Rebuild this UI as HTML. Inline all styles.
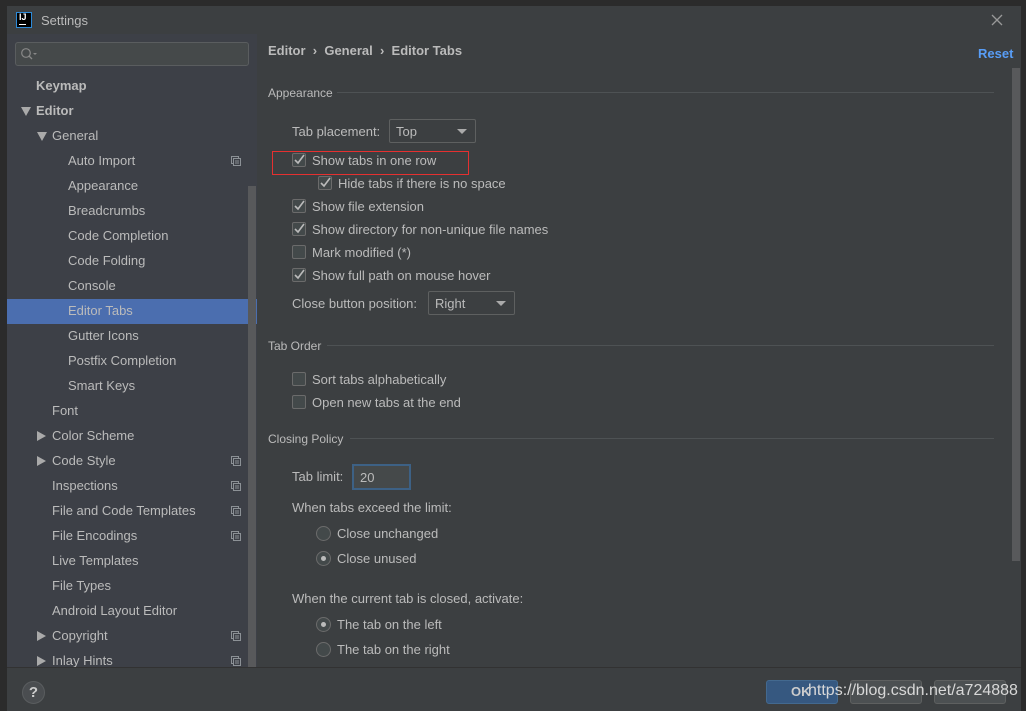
<!DOCTYPE html>
<html><head><meta charset="utf-8"><style>
*{margin:0;padding:0;box-sizing:border-box}
body{width:1026px;height:711px;background:#2b2b2b;font-family:"Liberation Sans",sans-serif;font-size:13px;color:#bbbbbb;position:relative;overflow:hidden}
.a{position:absolute;white-space:nowrap}
.win{position:absolute;left:7px;top:6px;width:1014px;height:705px;background:#3c3f41}
.side{position:absolute;left:7px;top:34px;width:250px;height:633px;background:#3d4047}
.t{position:absolute;white-space:nowrap;line-height:16px}
.s .t{margin-top:1px}
.b{font-weight:bold}
.arr{position:absolute;width:0;height:0}
.dn{border-left:5px solid transparent;border-right:5px solid transparent;border-top:9px solid #aaa}
.rt{border-top:5px solid transparent;border-bottom:5px solid transparent;border-left:9px solid #aaa}
.ic{position:absolute;width:10px;height:10px}
.cb{position:absolute;width:14px;height:14px;border:1px solid #6b6b6b;background:#43494a;border-radius:2px}
.rd{position:absolute;width:15px;height:15px;border:1px solid #6b6b6b;background:#43494a;border-radius:50%}
.rd.on::after{content:"";position:absolute;left:4px;top:4px;width:5px;height:5px;border-radius:50%;background:#bbb}
.sec{position:absolute;height:1px;background:#4e5254}
.dd{position:absolute;height:24px;border:1px solid #5e6060;border-radius:2px;background:#3c3f41;padding:4px 0 0 6px}
.dd::after{content:"";position:absolute;right:8px;top:9px;border-left:5px solid transparent;border-right:5px solid transparent;border-top:5px solid #aaa}
.btn{position:absolute;top:680px;height:24px;border:1px solid #5e6060;border-radius:3px;background:#4c5052}
</style></head><body>
<div class="win"></div>
<div class="a" style="left:16px;top:12px;width:16px;height:16px;background:#000;border:1px solid #2d8ad8"></div>
<div class="a b" style="left:19px;top:12px;font-size:9px;color:#fff">IJ</div>
<div class="a" style="left:19px;top:24px;width:7px;height:1px;background:#fff"></div>
<div class="a" style="left:41px;top:13px;font-size:13px;color:#bbb">Settings</div>
<svg class="a" style="left:991px;top:14px" width="12" height="12"><path d="M1 1L11 11M11 1L1 11" stroke="#999" stroke-width="1.3"/></svg>
<div class="side"></div>
<div class="a" style="left:15px;top:42px;width:234px;height:24px;border:1px solid #5a5d5f;border-radius:3px;background:#45494a"></div>
<svg class="a" style="left:20px;top:47px" width="20" height="14"><circle cx="6" cy="6" r="4.3" fill="none" stroke="#888" stroke-width="1.2"/><path d="M9 9L12 12" stroke="#888" stroke-width="1.3"/><path d="M13 6h4l-2 2z" fill="#888"/></svg>
<div class="a" style="left:7px;top:299px;width:250px;height:25px;background:#4b6eaf"></div>
<div class="s">
<div class="t b" style="left:36px;top:77px">Keymap</div>
<div class="arr dn" style="left:21px;top:107px"></div><div class="t b" style="left:36px;top:102px">Editor</div>
<div class="arr dn" style="left:37px;top:132px"></div><div class="t" style="left:52px;top:127px">General</div>
<div class="t" style="left:68px;top:152px">Auto Import</div>
<div class="t" style="left:68px;top:177px">Appearance</div>
<div class="t" style="left:68px;top:202px">Breadcrumbs</div>
<div class="t" style="left:68px;top:227px">Code Completion</div>
<div class="t" style="left:68px;top:252px">Code Folding</div>
<div class="t" style="left:68px;top:277px">Console</div>
<div class="t" style="left:68px;top:302px">Editor Tabs</div>
<div class="t" style="left:68px;top:327px">Gutter Icons</div>
<div class="t" style="left:68px;top:352px">Postfix Completion</div>
<div class="t" style="left:68px;top:377px">Smart Keys</div>
<div class="t" style="left:52px;top:402px">Font</div>
<div class="arr rt" style="left:37px;top:431px"></div><div class="t" style="left:52px;top:427px">Color Scheme</div>
<div class="arr rt" style="left:37px;top:456px"></div><div class="t" style="left:52px;top:452px">Code Style</div>
<div class="t" style="left:52px;top:477px">Inspections</div>
<div class="t" style="left:52px;top:502px">File and Code Templates</div>
<div class="t" style="left:52px;top:527px">File Encodings</div>
<div class="t" style="left:52px;top:552px">Live Templates</div>
<div class="t" style="left:52px;top:577px">File Types</div>
<div class="t" style="left:52px;top:602px">Android Layout Editor</div>
<div class="arr rt" style="left:37px;top:631px"></div><div class="t" style="left:52px;top:627px">Copyright</div>
<div class="arr rt" style="left:37px;top:656px"></div><div class="t" style="left:52px;top:652px">Inlay Hints</div>
</div>
<svg width="0" height="0" style="position:absolute"><defs><g id="cp"><rect x="0.5" y="0.5" width="7" height="7" fill="none" stroke="#8c9196"/><rect x="2.5" y="2.5" width="7" height="7" fill="#3d4047" stroke="#8c9196"/><path d="M4 5h4M4 7h4" stroke="#8c9196"/></g></defs></svg>
<svg class="ic" style="left:231px;top:156px"><use href="#cp"/></svg>
<svg class="ic" style="left:231px;top:456px"><use href="#cp"/></svg>
<svg class="ic" style="left:231px;top:481px"><use href="#cp"/></svg>
<svg class="ic" style="left:231px;top:506px"><use href="#cp"/></svg>
<svg class="ic" style="left:231px;top:531px"><use href="#cp"/></svg>
<svg class="ic" style="left:231px;top:631px"><use href="#cp"/></svg>
<svg class="ic" style="left:231px;top:656px"><use href="#cp"/></svg>
<div class="a" style="left:248px;top:186px;width:8px;height:481px;background:#58595b"></div>
<div class="t b" style="left:268px;top:43px">Editor &nbsp;›&nbsp; General &nbsp;›&nbsp; Editor Tabs</div>
<div class="t b" style="left:978px;top:46px;color:#589df6">Reset</div>
<div class="a" style="left:1012px;top:68px;width:8px;height:493px;background:#58595b"></div>
<div class="t" style="left:268px;top:85px;font-size:12px">Appearance</div><div class="sec" style="left:337px;top:92px;width:657px"></div>
<div class="t" style="left:292px;top:124px">Tab placement:</div>
<div class="dd" style="left:389px;top:119px;width:87px">Top</div>
<div class="a" style="left:272px;top:151px;width:197px;height:24px;border:1px solid #e53030"></div>
<div class="cb" style="left:292px;top:153px"></div><div class="t" style="left:312px;top:153px">Show tabs in one row</div>
<div class="cb" style="left:318px;top:176px"></div><div class="t" style="left:338px;top:176px">Hide tabs if there is no space</div>
<div class="cb" style="left:292px;top:199px"></div><div class="t" style="left:312px;top:199px">Show file extension</div>
<div class="cb" style="left:292px;top:222px"></div><div class="t" style="left:312px;top:222px">Show directory for non-unique file names</div>
<div class="cb" style="left:292px;top:245px"></div><div class="t" style="left:312px;top:245px">Mark modified (*)</div>
<div class="cb" style="left:292px;top:268px"></div><div class="t" style="left:312px;top:268px">Show full path on mouse hover</div>
<svg class="a" style="left:292px;top:150px" width="50" height="140"><g fill="none" stroke="#bbb" stroke-width="1.6"><path d="M3 10l3 3 6-8"/><path d="M29 33l3 3 6-8"/><path d="M3 56l3 3 6-8"/><path d="M3 79l3 3 6-8"/><path d="M3 125l3 3 6-8"/></g></svg>
<div class="t" style="left:292px;top:296px">Close button position:</div>
<div class="dd" style="left:428px;top:291px;width:87px">Right</div>
<div class="t" style="left:268px;top:338px;font-size:12px">Tab Order</div><div class="sec" style="left:327px;top:345px;width:667px"></div>
<div class="cb" style="left:292px;top:372px"></div><div class="t" style="left:312px;top:372px">Sort tabs alphabetically</div>
<div class="cb" style="left:292px;top:395px"></div><div class="t" style="left:312px;top:395px">Open new tabs at the end</div>
<div class="t" style="left:268px;top:431px;font-size:12px">Closing Policy</div><div class="sec" style="left:350px;top:438px;width:644px"></div>
<div class="t" style="left:292px;top:469px">Tab limit:</div>
<div class="a" style="left:352px;top:464px;width:59px;height:26px;border:2px solid #3d6185;background:#45494a;padding:4px 0 0 6px">20</div>
<div class="t" style="left:292px;top:500px">When tabs exceed the limit:</div>
<div class="rd" style="left:316px;top:526px"></div><div class="t" style="left:337px;top:526px">Close unchanged</div>
<div class="rd on" style="left:316px;top:551px"></div><div class="t" style="left:337px;top:551px">Close unused</div>
<div class="t" style="left:292px;top:591px">When the current tab is closed, activate:</div>
<div class="rd on" style="left:316px;top:617px"></div><div class="t" style="left:337px;top:617px">The tab on the left</div>
<div class="rd" style="left:316px;top:642px"></div><div class="t" style="left:337px;top:642px">The tab on the right</div>
<div class="a" style="left:7px;top:667px;width:1014px;height:1px;background:#323232"></div>
<div class="a" style="left:7px;top:668px;width:1014px;height:43px;background:#3c3f41"></div>
<div class="a b" style="left:22px;top:681px;width:23px;height:23px;border-radius:50%;background:#4a4d50;border:1px solid #5a5d5f;text-align:center;line-height:21px;font-size:15px;color:#ccc">?</div>
<div class="btn" style="left:766px;width:72px;background:#365880;border-color:#43698f"></div>
<div class="btn" style="left:850px;width:72px"></div>
<div class="btn" style="left:934px;width:72px"></div>
<div class="a b" style="left:791px;top:684px;color:#ccc">OK</div>
<div class="a" style="left:808px;top:682px;font-size:16px;color:#d8d8d8">https://blog.csdn.net/a724888</div>
</body></html>
